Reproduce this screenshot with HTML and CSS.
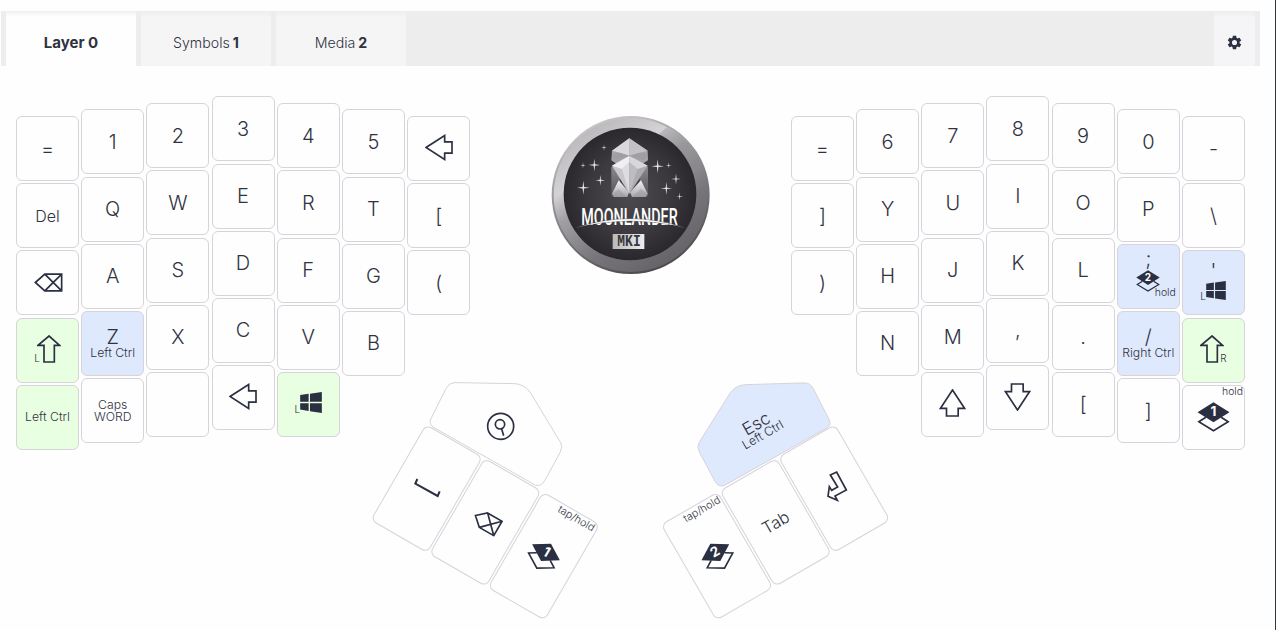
FILE: index.html
```html
<!DOCTYPE html>
<html lang="en">
<head>
<meta charset="utf-8">
<title>Moonlander layout</title>
<link rel="stylesheet" href="styles.css">
</head>
<body>
<svg class="defs" aria-hidden="true">
  <defs>
    <symbol id="left" viewBox="0 0 84 80"><path class="line" d="M3 40 59 4V23H81V57H59V76Z"/></symbol>
    <symbol id="up" viewBox="0 0 80 84"><path class="line" d="M40 3 76 58H57V81H22V58H4Z"/></symbol>
    <symbol id="down" viewBox="0 0 80 84"><path class="line" d="M40 81 76 26H57V3H22V26H4Z"/></symbol>
    <symbol id="shift" viewBox="0 0 72 84"><path class="line" d="M36 3 68 31H52V81H21V31H3Z"/></symbol>
    <symbol id="back" viewBox="0 0 86 56"><path class="line" d="M4 28 32 3H82V53H32ZM32 3 82 53M82 3 32 53"/></symbol>
    <symbol id="win" viewBox="0 0 64 62"><path class="solid" d="M0 9 25 5V29H0ZM29 5 64 0V29H29ZM0 33H25V56L0 52ZM29 33H64V62L29 57Z"/></symbol>
    <symbol id="diamonds" viewBox="0 0 98 90"><path class="line" d="M26 46 5 59 49 86 93 59 72 46"/><path class="solid" d="M1 31 49 1 97 31 49 61Z"/></symbol>
  </defs>
</svg>

<nav class="tabs">
  <div class="tab active"><b>Layer 0</b></div>
  <div class="tab">Symbols <b>1</b></div>
  <div class="tab">Media <b>2</b></div>
  <div class="gear"><svg width="17" height="17" viewBox="0 0 24 24"><path class="solid" d="M19.14 12.94c.04-.3.06-.61.06-.94 0-.32-.02-.64-.07-.94l2.03-1.58c.18-.14.23-.41.12-.61l-1.92-3.32c-.12-.22-.37-.29-.59-.22l-2.39.96c-.5-.38-1.03-.7-1.62-.94l-.36-2.54c-.04-.24-.24-.41-.48-.41h-3.84c-.24 0-.43.17-.47.41l-.36 2.54c-.59.24-1.13.57-1.62.94l-2.39-.96c-.22-.08-.47 0-.59.22L2.74 8.87c-.12.21-.08.47.12.61l2.03 1.58c-.05.3-.09.63-.09.94s.02.64.07.94l-2.03 1.58c-.18.14-.23.41-.12.61l1.92 3.32c.12.22.37.29.59.22l2.39-.96c.5.38 1.03.7 1.62.94l.36 2.54c.05.24.24.41.48.41h3.84c.24 0 .44-.17.47-.41l.36-2.54c.59-.24 1.13-.56 1.62-.94l2.39.96c.22.08.47 0 .59-.22l1.92-3.32c.12-.22.07-.47-.12-.61zM12 15.6A3.6 3.6 0 1 1 12 8.4a3.6 3.6 0 0 1 0 7.2z"/></svg></div>
</nav>

<main class="board">
  <section class="half">
    <div class="col outer"><div class="key">=</div><div class="key word">Del</div><div class="key"><svg class="i-back"><use href="#back"/></svg></div><div class="key green left"><small class="side">L</small><svg class="i-shift"><use href="#shift"/></svg></div><div class="key green mod">Left Ctrl</div></div>
    <div class="col near"><div class="key">1</div><div class="key">Q</div><div class="key">A</div><div class="key blue dual"><span>Z</span><span class="mod">Left Ctrl</span></div><div class="key mod">Caps<br>WORD</div></div>
    <div class="col mid"><div class="key">2</div><div class="key">W</div><div class="key">S</div><div class="key">X</div><div class="key"></div></div>
    <div class="col top"><div class="key">3</div><div class="key">E</div><div class="key">D</div><div class="key">C</div><div class="key"><svg class="i-left"><use href="#left"/></svg></div></div>
    <div class="col mid"><div class="key">4</div><div class="key">R</div><div class="key">F</div><div class="key">V</div><div class="key green"><div class="pair"><small class="side">L</small><svg class="i-win"><use href="#win"/></svg></div></div></div>
    <div class="col near"><div class="key">5</div><div class="key">T</div><div class="key">G</div><div class="key">B</div></div>
    <div class="col outer"><div class="key"><svg class="i-left"><use href="#left"/></svg></div><div class="key">[</div><div class="key">(</div></div>
  </section>

  <svg class="badge" viewBox="0 0 540 540">
    <defs>
      <linearGradient id="ring" x1=".15" y1=".05" x2=".75" y2="1"><stop offset="0" stop-color="#b5b3b6"/><stop offset=".28" stop-color="#d4d2d5"/><stop offset=".42" stop-color="#a2a0a3"/><stop offset=".7" stop-color="#77757a"/><stop offset="1" stop-color="#626064"/></linearGradient>
      <linearGradient id="rim" x1=".2" y1="0" x2=".6" y2="1"><stop offset="0" stop-color="#cfcdd0"/><stop offset=".5" stop-color="#8b898d"/><stop offset="1" stop-color="#4d4b4f"/></linearGradient>
      <radialGradient id="face"><stop offset="0" stop-color="#4d4b4f"/><stop offset=".6" stop-color="#3b393d"/><stop offset="1" stop-color="#2a282c"/></radialGradient>
      <linearGradient id="plate"><stop offset="0" stop-color="#b9b8ba"/><stop offset="1" stop-color="#ededee"/></linearGradient>
      <linearGradient id="leg" x1="0" y1="0" x2="0" y2="1"><stop offset="0" stop-color="#8a888c"/><stop offset="1" stop-color="#555357"/></linearGradient>
      <linearGradient id="foot" x1="0" y1="0" x2="0" y2="1"><stop offset="0" stop-color="#f2f1f3"/><stop offset="1" stop-color="#a9a7ab"/></linearGradient>
      <path id="star" d="M0-19 2-2 17 0 2 2 0 19-2 2-17 0-2-2Z"/>
    </defs>
    <circle cx="272" cy="270" r="234" fill="url(#ring)" stroke="url(#rim)" stroke-width="6"/>
    <path d="M380 67A230 230 0 0 1 485 180L452 190A198 198 0 0 0 355 90Z" fill="#858388" opacity=".3"/>
    <circle cx="270" cy="267" r="199" fill="url(#face)"/>
    <g>
      <path fill="url(#leg)" d="M214 185H240V275H214ZM299 185H324V275H299Z"/>
      <path fill="#a5a3a7" d="M268 100 216 137 214 166 231 178 268 151 306 178 324 166 323 137Z"/>
      <path fill="#d9d8db" d="M268 100 216 137 239 143 268 152Z"/>
      <path fill="#c3c1c5" d="M268 100 323 137 300 143 268 152Z"/>
      <path fill="#a09ea3" d="M239 143 216 150 226 166 268 152ZM300 143 323 150 312 166 268 152Z"/>
      <path fill="url(#foot)" d="M236 226 216 266 222 276 262 276 267 262ZM303 226 323 266 317 276 276 276 270 262Z"/>
      <path fill="#8d8b90" opacity=".4" d="M216 266 236 252 262 276H222ZM323 266 303 252 276 276H317Z"/>
      <path fill="#c8c6ca" d="M268 152 216 182 268 266Z"/>
      <path fill="#aeacb1" d="M268 152 323 182 268 266Z"/>
      <path fill="#f0eff1" d="M268 152 216 182 246 192 268 172Z"/>
      <path fill="#d8d7da" d="M268 152 323 182 292 192 268 172Z"/>
      <path fill="#dddce0" d="M268 172 246 192 268 266Z"/>
      <path fill="#bebcc1" d="M268 172 292 192 268 266Z"/>
    </g>
    <g fill="#e4e3e6"><use href="#star" x="163" y="180"/><use href="#star" transform="translate(181 226) scale(.85)"/><use href="#star" transform="translate(130 248) scale(1.1)"/><use href="#star" transform="translate(353 184) scale(1.1)"/><use href="#star" transform="translate(408 222) scale(.85)"/><use href="#star" transform="translate(379 250)"/><use href="#star" transform="translate(419 274) scale(.6)"/><use href="#star" transform="translate(386 181) scale(.5)"/><use href="#star" transform="translate(129 181) scale(.5)"/><use href="#star" transform="translate(192 128) scale(.5)"/></g>
    <text class="brand" x="124" y="361" textLength="289" lengthAdjust="spacingAndGlyphs">MOONLANDER</text>
    <path d="M108 368Q270 314 434 368Q270 328 108 368Z" fill="#fff" stroke="#39373b" stroke-width="1"/>
    <rect x="218" y="387" width="95" height="45" fill="url(#plate)"/>
    <text class="mark" x="232" y="424" textLength="70" lengthAdjust="spacingAndGlyphs">MKI</text>
  </svg>

  <section class="half">
    <div class="col outer"><div class="key">=</div><div class="key">]</div><div class="key">)</div></div>
    <div class="col near"><div class="key">6</div><div class="key">Y</div><div class="key">H</div><div class="key">N</div></div>
    <div class="col mid"><div class="key">7</div><div class="key">U</div><div class="key">J</div><div class="key">M</div><div class="key"><svg class="i-up"><use href="#up"/></svg></div></div>
    <div class="col top"><div class="key">8</div><div class="key">I</div><div class="key">K</div><div class="key">,</div><div class="key"><svg class="i-up"><use href="#down"/></svg></div></div>
    <div class="col mid"><div class="key">9</div><div class="key">O</div><div class="key">L</div><div class="key">.</div><div class="key">[</div></div>
    <div class="col near"><div class="key">0</div><div class="key">P</div><div class="key blue semi"><span>;</span><svg class="i-layer-small" viewBox="0 0 98 90"><use href="#diamonds" width="98" height="90"/><text class="num" x="49" y="45">2</text></svg><small class="hold low">hold</small></div><div class="key blue dual"><span>/</span><span class="mod">Right Ctrl</span></div><div class="key">]</div></div>
    <div class="col outer"><div class="key">-</div><div class="key">\</div><div class="key blue quote"><span>'</span><div class="pair"><small class="side">L</small><svg class="i-win"><use href="#win"/></svg></div></div><div class="key green right"><svg class="i-shift"><use href="#shift"/></svg><small class="side">R</small></div><div class="key"><svg class="i-layer" viewBox="0 0 98 90"><use href="#diamonds" width="98" height="90"/><text class="num" x="49" y="43">1</text></svg><small class="hold">hold</small></div></div>
  </section>

  <svg class="thumbs thumbs-left" viewBox="0 0 780 780">
    <path class="cap" d="M300 38 465 41Q492 43 510 66L602 218Q609 232 601 246L553 334Q544 349 527 346L219 171Q207 163 212 148L258 56Q268 38 282 38Z"/>
    <g transform="translate(200 356) rotate(30)"><rect class="cap" x="-97.5" y="-165" width="195" height="330" rx="18"/></g>
    <g transform="translate(376 457) rotate(30)"><rect class="cap" x="-97.5" y="-165" width="195" height="330" rx="18"/></g>
    <g transform="translate(551.5 558.5) rotate(30)"><rect class="cap" x="-97.5" y="-165" width="195" height="330" rx="18"/><text class="tap" x="89" y="-136">tap/hold</text></g>
    <circle class="line" cx="422" cy="169" r="39"/><circle class="line" cx="420" cy="163" r="14"/><path class="line" d="M425 177 431 197"/>
    <path class="line heavy" d="M172 327 166 341 233 378 239 364"/>
    <g transform="translate(380 456) rotate(30)"><use href="#back" x="-43" y="-28" width="86" height="56"/></g>
    <g transform="translate(551 559) rotate(30)"><use href="#diamonds" x="-49" y="-45" width="98" height="90"/><text class="num" x="1" y="-2">1</text></g>
  </svg>

  <svg class="thumbs thumbs-right" viewBox="0 0 780 780">
    <path class="cap fill-blue" d="M451 39 286 44Q259 45 241 68L147 218Q140 232 148 246L195 334Q204 351 222 347L532 173Q544 165 538 150L490 56Q481 39 465 39Z"/>
    <g transform="translate(201 558.5) rotate(-30)"><rect class="cap" x="-97.5" y="-165" width="195" height="330" rx="18"/><text class="tap" x="92" y="-134">tap/hold</text></g>
    <g transform="translate(377 457) rotate(-30)"><rect class="cap" x="-97.5" y="-165" width="195" height="330" rx="18"/><text class="tabword" y="18">Tab</text></g>
    <g transform="translate(552.5 356) rotate(-30)"><rect class="cap" x="-97.5" y="-165" width="195" height="330" rx="18"/></g>
    <g transform="translate(318 160) rotate(-30)"><text class="esc" y="19">Esc</text></g>
    <g transform="translate(338 194) rotate(-30)"><text class="escmod" y="13">Left Ctrl</text></g>
    <path class="line" d="M541 315 560 306 589 360 555 378 562 391 534 379 538 350 545 361 563 351Z"/>
    <g transform="translate(203 559) rotate(-30)"><use href="#diamonds" x="-49" y="-45" width="98" height="90"/><text class="num" x="0" y="-2">2</text></g>
  </svg>
</main>
</body>
</html>
```

FILE: styles.css
```css
* { box-sizing: border-box; }
body {
  margin: 0;
  height: 630px;
  overflow: hidden;
  padding-top: 11px;
  background: #fefefe;
  border-right: 1px solid #2c3a44;
  color: #30323e;
  font-family: Inter, "Liberation Sans", sans-serif;
}
.defs { position: absolute; width: 0; height: 0; }
.line { fill: none; stroke: #2b2f42; stroke-width: 5; }
.heavy { stroke-width: 6; }
.solid { fill: #2b2f42; }

.tabs {
  display: flex;
  gap: 5px;
  width: 1259px;
  height: 55px;
  margin-left: 1px;
  padding: 0 5px;
  background: #eeedee;
}
.tab {
  width: 130px;
  display: flex;
  align-items: center;
  justify-content: center;
  gap: 3px;
  padding-top: 8px;
  font-size: 14.2px;
  font-weight: 300;
  background: linear-gradient(#eeedee, #f6f5f6 6px);
}
.tab.active { background: linear-gradient(#f1f0f1, #fefefe 6px); font-size: 15px; }
.tab b { font-weight: 700; }
.gear {
  width: 41px;
  margin-left: auto;
  display: flex;
  align-items: center;
  justify-content: center;
  padding-top: 7px;
  background: linear-gradient(#eeedee, #f5f4f6 6px);
}

.board {
  position: relative;
  display: flex;
  justify-content: space-between;
  align-items: flex-start;
  padding: 30px 30px 0 16px;
  height: 564px;
}
.half { display: flex; gap: 2.2px; }
.col { display: flex; flex-direction: column; gap: 2.2px; }
.outer { padding-top: 20px; }
.near { padding-top: 13.4px; }
.mid { padding-top: 7.2px; }
.top { padding-top: .4px; }
.key {
  position: relative;
  width: 63px;
  height: 65px;
  display: flex;
  align-items: center;
  justify-content: center;
  border: 1px solid #d6d3da;
  border-radius: 6px;
  background: #fefefe;
  font-size: 20px;
  font-weight: 300;
  line-height: 1;
  text-align: center;
}
.word { font-size: 16px; }
.mod { font-size: 12.2px; line-height: 12px; }
.green { background: #e9ffe1; }
.blue { background: #dfe9fd; }
.dual { flex-direction: column; }
.dual .mod { white-space: nowrap; }
.side { font-size: 10px; align-self: flex-end; margin-bottom: 19px; }
.left .side { margin-right: -3px; }
.right .side { margin-left: -4px; }
.semi { flex-direction: column; justify-content: flex-start; padding-top: 4px; }
.semi .i-layer-small { margin-top: 1px; }
.quote { flex-direction: column; justify-content: flex-start; padding-top: 10px; }
.pair { display: flex; margin-top: -3px; }
.pair .side { margin-bottom: -1px; }
.quote .pair { margin-top: 0; padding-left: 0; margin-left: -1px; }
.hold { position: absolute; right: 1px; top: 1px; font-size: 10.4px; }
.hold.low { top: auto; right: 3px; bottom: 9px; }

.i-left { width: 28px; height: 27px; margin-top: -2px; }
.i-up { width: 27px; height: 28px; margin-top: -2px; }
.i-shift { width: 24px; height: 28px; margin-top: -2px; }
.i-back { width: 29px; height: 19px; margin-left: 2px; }
.i-win { width: 22px; height: 21px; }
.quote .i-win { width: 20px; height: 19px; }
.i-layer { width: 33px; height: 30px; }
.i-layer-small { width: 24px; height: 22px; }
.num { font-size: 41px; font-weight: 700; fill: #fff; text-anchor: middle; }

.badge { width: 180px; height: 180px; margin: 9px 1px 0 0; }
.brand { font-family: "Roboto", sans-serif; font-size: 74px; font-weight: 500; fill: #fff; }
.mark { font-family: "Liberation Mono", monospace; font-size: 50px; font-weight: 700; fill: #38363a; }

.thumbs { position: absolute; top: 304px; width: 260px; height: 260px; }
.thumbs-left { left: 360px; }
.thumbs-right { left: 650px; }
.cap { fill: #fefefe; stroke: #d6d3da; stroke-width: 3; }
.fill-blue { fill: #dfe9fd; }
.tap { font-size: 32px; font-weight: 300; text-anchor: end; fill: #30323e; }
.tabword, .esc { font-size: 50px; font-weight: 300; text-anchor: middle; fill: #30323e; }
.esc { font-size: 52px; }
.escmod { font-size: 37px; font-weight: 300; text-anchor: middle; fill: #30323e; }
```
